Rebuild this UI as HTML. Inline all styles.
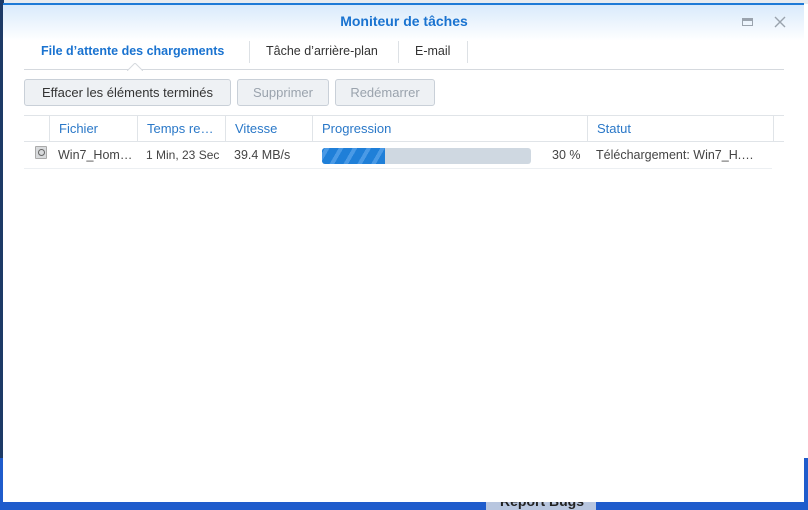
<!DOCTYPE html>
<html><head><meta charset="utf-8"><style>
*{margin:0;padding:0;box-sizing:border-box}
body{width:808px;height:510px;overflow:hidden;position:relative;background:#fff;font-family:"Liberation Sans",Tahoma,sans-serif;font-size:12px;color:#444}
.bgtop{position:absolute;left:0;top:0;width:808px;height:4px;background:#e8ebef}
.bgleft{position:absolute;left:0;top:0;width:4px;height:458px;background:#1d3a66}
.bgblue{position:absolute;left:0;top:458px;width:808px;height:52px;background:#1f5ccc}
.rb{position:absolute;left:486px;top:496px;width:110px;height:14px;background:#b8c6df;font-size:14px;font-weight:bold;color:#222;padding-left:14px;line-height:10px;overflow:hidden}
.win{position:absolute;left:3px;top:3px;width:801px;height:499px;background:#fff;border-top:2px solid #1e7ad6}
.title{height:60px;background:linear-gradient(#d9eafb,#fff 60%)}
.title h1{position:absolute;left:0;width:808px;top:11px;text-align:center;font-size:14px;color:#1a73d0;font-weight:bold}
.tabs{position:absolute;left:24px;top:38px;width:760px;height:32px;border-bottom:1px solid #d5d9de}
.tab{position:absolute;top:0;height:26px;line-height:26px;font-size:12.5px;color:#333}
.sep{position:absolute;top:3px;width:1px;height:22px;background:#dde1e5}
.btn{position:absolute;top:79px;height:27px;line-height:25px;border:1px solid #c9d0d8;border-radius:3px;background:#eef1f4;text-align:center;font-size:13px}
.hdr{position:absolute;top:115px;left:24px;width:760px;height:27px;border-top:1px solid #e0e4e8;border-bottom:1px solid #e0e4e8}
.h{position:absolute;top:0;height:26px;line-height:25px;color:#2a78c8;font-size:13px;border-left:1px solid #e0e4e8;padding-left:9px}
.row{position:absolute;top:142px;left:24px;width:748px;height:27px;border-bottom:1px solid #eceff2;font-size:12.5px}
.c{position:absolute;top:0;line-height:26px;white-space:nowrap}
</style></head><body>
<div class="bgtop"></div><div class="bgleft"></div><div class="bgblue"></div>
<div class="rb">Report Bugs</div>
<div class="win"><div class="title"></div></div>
<h1 style="position:absolute;left:0;width:808px;top:13px;text-align:center;font-size:14px;color:#1a73d0;font-weight:bold">Moniteur de tâches</h1>
<div style="position:absolute;left:742px;top:18px;width:11px;height:8px;border:1.5px solid #9aa3ad;border-top-width:3px"></div>
<svg style="position:absolute;left:774px;top:16px" width="12" height="12"><path d="M1 1L11 11M11 1L1 11" stroke="#9aa3ad" stroke-width="1.4"/></svg>
<div class="tabs">
 <div class="tab" style="left:17px;font-weight:bold;color:#1a73d0">File d’attente des chargements</div>
 <div class="sep" style="left:225px"></div>
 <div class="tab" style="left:242px">Tâche d’arrière-plan</div>
 <div class="sep" style="left:374px"></div>
 <div class="tab" style="left:391px">E-mail</div>
 <div class="sep" style="left:443px"></div>
</div>
<svg style="position:absolute;left:127px;top:63px" width="16" height="8"><path d="M0 8L8 0L16 8" fill="#fff" stroke="#d5d9de"/></svg>
<div class="btn" style="left:24px;width:207px;color:#333">Effacer les éléments terminés</div>
<div class="btn" style="left:237px;width:92px;color:#9aa3ad">Supprimer</div>
<div class="btn" style="left:335px;width:100px;color:#9aa3ad">Redémarrer</div>
<div class="hdr">
 <div class="h" style="left:25px;width:88px">Fichier</div>
 <div class="h" style="left:113px;width:88px">Temps re…</div>
 <div class="h" style="left:201px;width:87px">Vitesse</div>
 <div class="h" style="left:288px;width:275px">Progression</div>
 <div class="h" style="left:563px;width:186px">Statut</div>
 <div class="h" style="left:749px;width:11px"></div>
</div>
<div class="row">
 <div style="position:absolute;left:11px;top:4px;width:12px;height:13px;background:#d8dadc;border:1px solid #aaa;border-radius:1px"><div style="margin:2px;width:7px;height:7px;border:1px solid #666;border-radius:50%"></div></div>
 <div class="c" style="left:34px">Win7_Hom…</div>
 <div class="c" style="left:122px;font-size:12px">1 Min, 23 Sec</div>
 <div class="c" style="left:210px">39.4 MB/s</div>
 <div style="position:absolute;left:298px;top:6px;width:209px;height:16px;border-radius:3px;background:#cfd8e1;overflow:hidden"><div style="width:63px;height:16px;background:repeating-linear-gradient(-60deg,#1f7fd8 0 8px,#4a9ae6 8px 12px)"></div></div>
 <div class="c" style="left:528px">30 %</div>
 <div class="c" style="left:572px">Téléchargement: Win7_H.…</div>
</div>
</body></html>
